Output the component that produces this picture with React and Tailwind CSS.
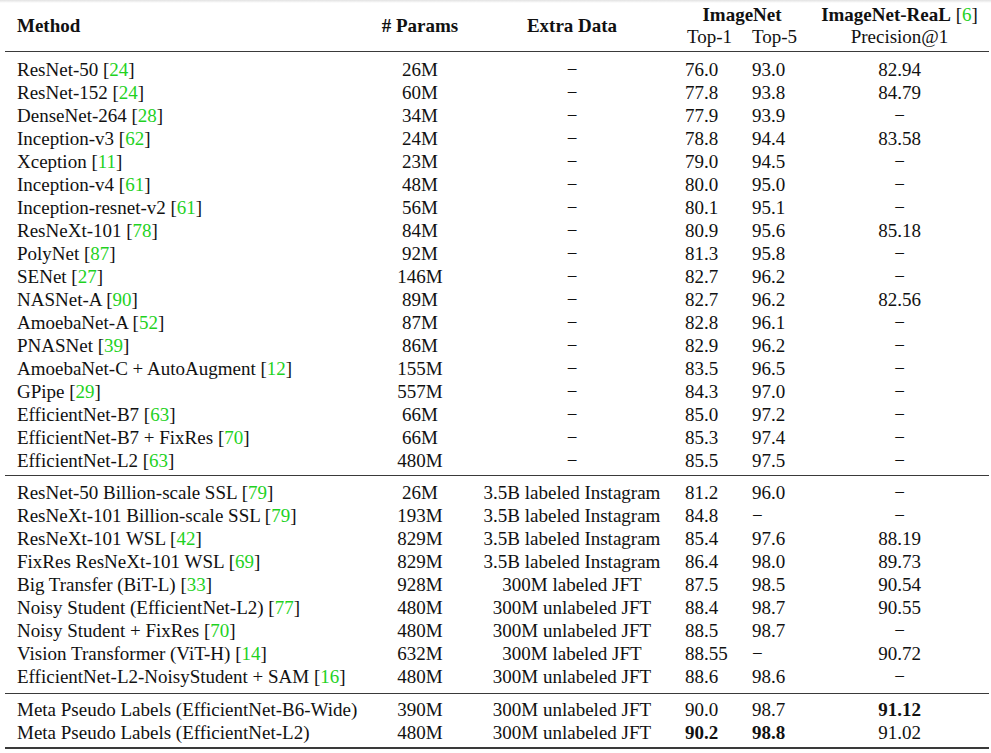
import React from "react";

const grid =
  "grid grid-cols-[365px_100px_204px_67px_69px_179px] items-center";

const D = "−";

const section1 = [
  ["ResNet-50", 24, "26M", D, "76.0", "93.0", "82.94"],
  ["ResNet-152", 24, "60M", D, "77.8", "93.8", "84.79"],
  ["DenseNet-264", 28, "34M", D, "77.9", "93.9", D],
  ["Inception-v3", 62, "24M", D, "78.8", "94.4", "83.58"],
  ["Xception", 11, "23M", D, "79.0", "94.5", D],
  ["Inception-v4", 61, "48M", D, "80.0", "95.0", D],
  ["Inception-resnet-v2", 61, "56M", D, "80.1", "95.1", D],
  ["ResNeXt-101", 78, "84M", D, "80.9", "95.6", "85.18"],
  ["PolyNet", 87, "92M", D, "81.3", "95.8", D],
  ["SENet", 27, "146M", D, "82.7", "96.2", D],
  ["NASNet-A", 90, "89M", D, "82.7", "96.2", "82.56"],
  ["AmoebaNet-A", 52, "87M", D, "82.8", "96.1", D],
  ["PNASNet", 39, "86M", D, "82.9", "96.2", D],
  ["AmoebaNet-C + AutoAugment", 12, "155M", D, "83.5", "96.5", D],
  ["GPipe", 29, "557M", D, "84.3", "97.0", D],
  ["EfficientNet-B7", 63, "66M", D, "85.0", "97.2", D],
  ["EfficientNet-B7 + FixRes", 70, "66M", D, "85.3", "97.4", D],
  ["EfficientNet-L2", 63, "480M", D, "85.5", "97.5", D],
];

const section2 = [
  ["ResNet-50 Billion-scale SSL", 79, "26M", "3.5B labeled Instagram", "81.2", "96.0", D],
  ["ResNeXt-101 Billion-scale SSL", 79, "193M", "3.5B labeled Instagram", "84.8", D, D],
  ["ResNeXt-101 WSL", 42, "829M", "3.5B labeled Instagram", "85.4", "97.6", "88.19"],
  ["FixRes ResNeXt-101 WSL", 69, "829M", "3.5B labeled Instagram", "86.4", "98.0", "89.73"],
  ["Big Transfer (BiT-L)", 33, "928M", "300M labeled JFT", "87.5", "98.5", "90.54"],
  ["Noisy Student (EfficientNet-L2)", 77, "480M", "300M unlabeled JFT", "88.4", "98.7", "90.55"],
  ["Noisy Student + FixRes", 70, "480M", "300M unlabeled JFT", "88.5", "98.7", D],
  ["Vision Transformer (ViT-H)", 14, "632M", "300M labeled JFT", "88.55", D, "90.72"],
  ["EfficientNet-L2-NoisyStudent + SAM", 16, "480M", "300M unlabeled JFT", "88.6", "98.6", D],
];

// bold flags: [top1, top5, real]
const section3 = [
  ["Meta Pseudo Labels (EfficientNet-B6-Wide)", null, "390M", "300M unlabeled JFT", "90.0", "98.7", "91.12", [0, 0, 1]],
  ["Meta Pseudo Labels (EfficientNet-L2)", null, "480M", "300M unlabeled JFT", "90.2", "98.8", "91.02", [1, 1, 0]],
];

const Cite = ({ n }) => (
  <>
    {" "}[<span className="text-[#1fd21f]">{n}</span>]
  </>
);

const Row = ({ r }) => {
  const [method, cite, params, extra, top1, top5, real, bold = [0, 0, 0]] = r;
  return (
    <div className={`${grid} h-[23px]`}>
      <div className="pl-[12px] whitespace-nowrap">
        {method}
        {cite && <Cite n={cite} />}
      </div>
      <div className="text-center">{params}</div>
      <div className="text-center whitespace-nowrap">{extra}</div>
      <div className={`pl-[11px] ${bold[0] ? "font-bold" : ""}`}>{top1}</div>
      <div className={`pl-[11px] ${bold[1] ? "font-bold" : ""}`}>{top5}</div>
      <div className={`text-center ${bold[2] ? "font-bold" : ""}`}>{real}</div>
    </div>
  );
};

const Rule = ({ thick }) => (
  <div className={`${thick ? "h-[2px]" : "h-px"} bg-[#3a3a3a]`} />
);

export default function App() {
  return (
    <div className="w-[991px] h-[753px] bg-white overflow-hidden font-['Liberation_Serif',serif] text-[19px] leading-[23px] text-[#111]">
      <div className="h-[3px] bg-gradient-to-b from-[#e2e2e2] to-white" />
      <div className="ml-[5px] w-[984px]">
        {/* header */}
        <div className={`${grid} pb-[4px]`}>
          <div className="row-span-2 pl-[12px] font-bold">Method</div>
          <div className="row-span-2 text-center font-bold">
            # Params
          </div>
          <div className="row-span-2 text-center font-bold">Extra Data</div>
          <div className="col-span-2 h-[22px] text-center font-bold">
            ImageNet
          </div>
          <div className="h-[22px] text-center">
            <span className="font-bold">ImageNet-ReaL</span>{" "}
            [<span className="text-[#1fd21f]">6</span>]
          </div>
          <div className="h-[22px] pl-[13px]">Top-1</div>
          <div className="h-[22px] pl-[11px]">Top-5</div>
          <div className="h-[22px] text-center">Precision@1</div>
        </div>
        <Rule />

        <div className="pt-[6px] pb-[3px]">
          {section1.map((r) => (
            <Row key={r[0]} r={r} />
          ))}
        </div>
        <Rule />

        <div className="pt-[5px] pb-[5px]">
          {section2.map((r) => (
            <Row key={r[0]} r={r} />
          ))}
        </div>
        <Rule />

        <div className="pt-[4px] pb-[3px]">
          {section3.map((r) => (
            <Row key={r[0]} r={r} />
          ))}
        </div>
        <Rule thick />
      </div>
    </div>
  );
}
